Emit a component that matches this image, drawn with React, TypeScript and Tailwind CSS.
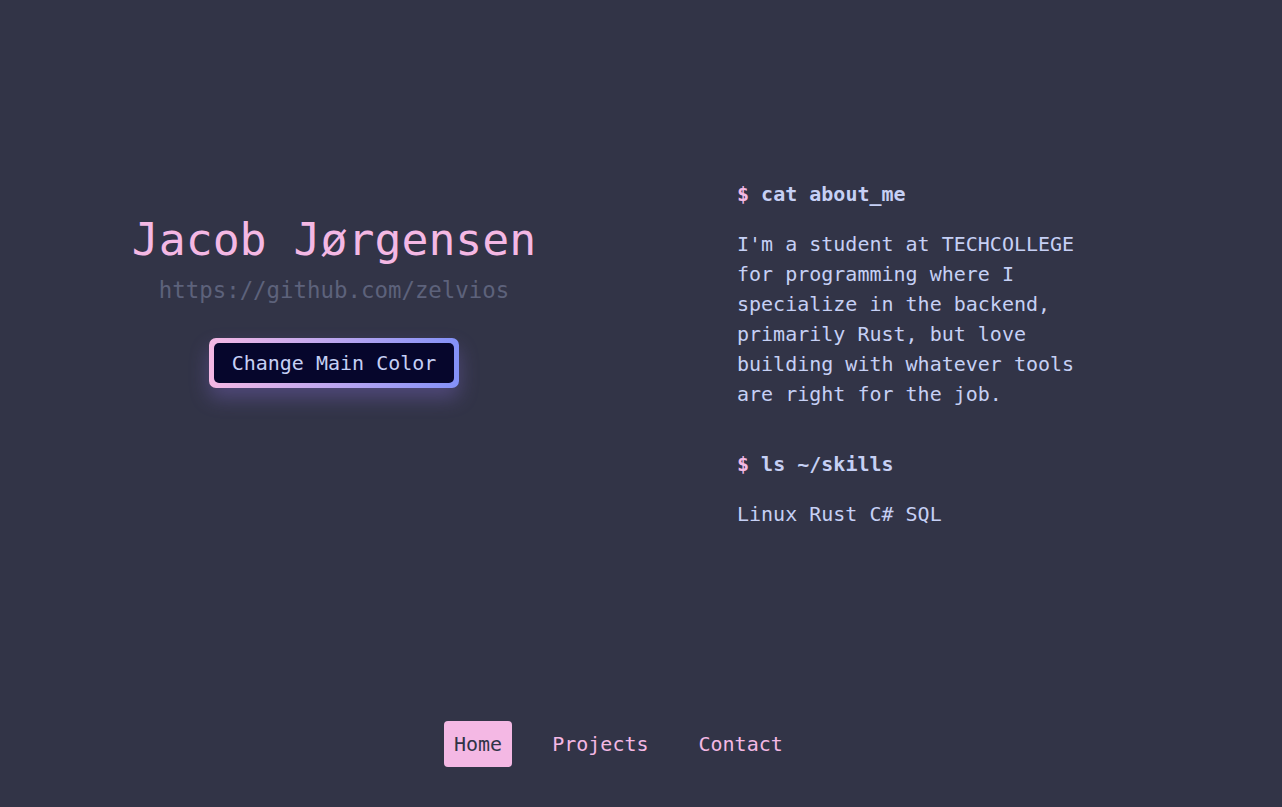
import React from "react";

export default function App() {
  const mono = "font-['DejaVu_Sans_Mono','Liberation_Mono',monospace]";
  return (
    <div className={`w-full h-[807px] bg-[#323447] ${mono} flex flex-col overflow-hidden`}>
      <main className="flex flex-1">
        <section className="w-[668px] flex flex-col items-center pt-[208px]">
          <h1 className="text-[44.8px] leading-[64px] text-[#f4b8e4]">Jacob Jørgensen</h1>
          <a className="text-[22.4px] leading-[32px] text-[#5d627b] mt-[2px]">https://github.com/zelvios</a>
          <button className="mt-[32px] rounded-[7px] p-[5px] bg-gradient-to-r from-[#f4b8e4] to-[#8391f8] shadow-[0_10px_20px_rgba(150,120,240,0.3)]">
            <span className="block rounded-[5px] bg-[#06062c] px-[18px] h-[40px] leading-[40px] text-[20px] text-[#c6d0f5]">
              Change Main Color
            </span>
          </button>
        </section>
        <section className="ml-[69px] w-[350px] pt-[179px] text-[20px] leading-[30px] text-[#c6d0f5]">
          <h2 className="font-bold"><span className="text-[#f4b8e4]">$</span> cat about_me</h2>
          <p className="mt-[20px]">
            I'm a student at TECHCOLLEGE for programming where I specialize in the backend, primarily Rust, but love building with whatever tools are right for the job.
          </p>
          <h2 className="font-bold mt-[40px]"><span className="text-[#f4b8e4]">$</span> ls ~/skills</h2>
          <p className="mt-[20px]">Linux Rust C# SQL</p>
        </section>
      </main>
      <nav className="flex gap-[30px] pl-[444px] pb-[40px] text-[20px]">
        <a className="h-[46px] leading-[46px] px-[10px] rounded-[4px] bg-[#f4b8e4] text-[#303446]">Home</a>
        <a className="h-[46px] leading-[46px] px-[10px] rounded-[4px] text-[#f4b8e4]">Projects</a>
        <a className="h-[46px] leading-[46px] px-[10px] rounded-[4px] text-[#f4b8e4]">Contact</a>
      </nav>
    </div>
  );
}
